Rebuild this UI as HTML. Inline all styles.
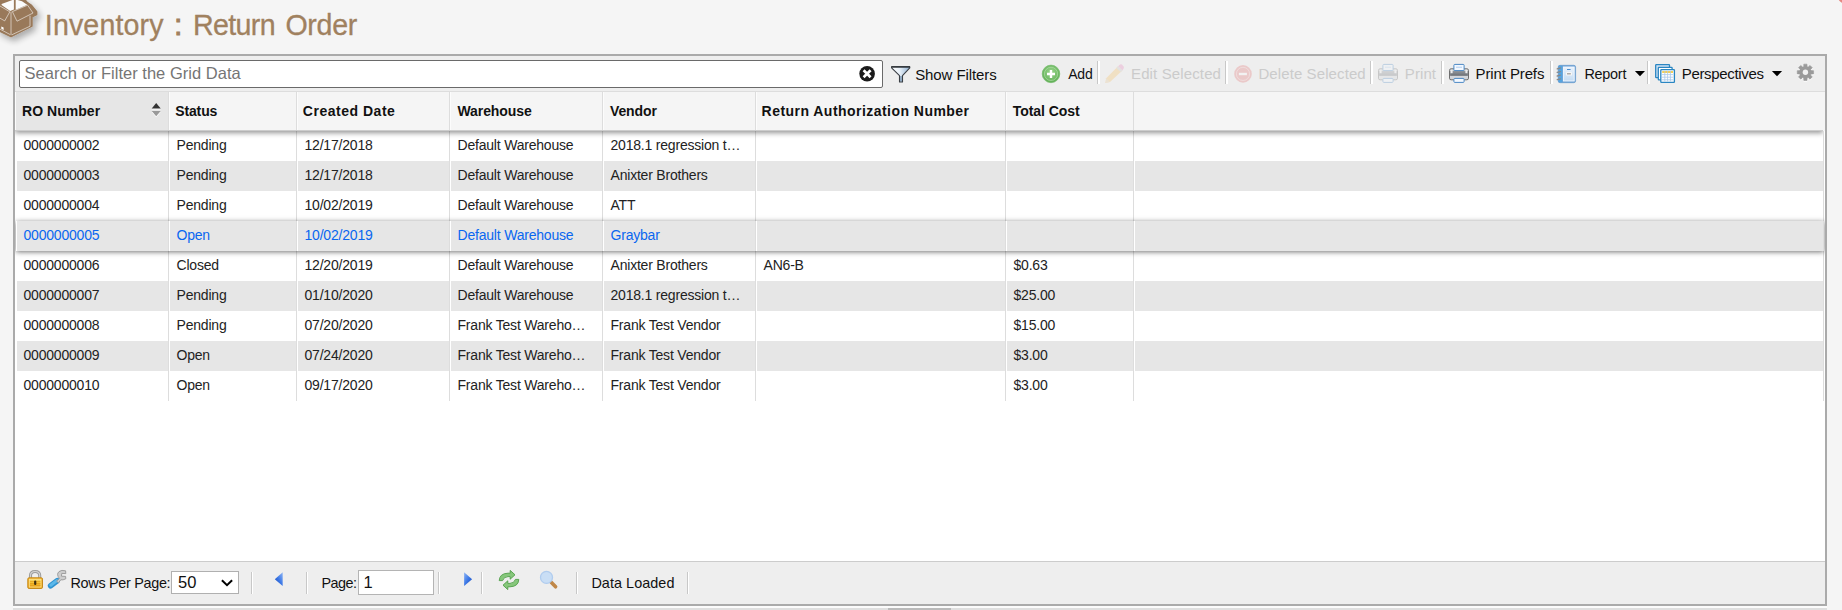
<!DOCTYPE html>
<html lang="en">
<head>
<meta charset="utf-8">
<title>Inventory : Return Order</title>
<style>
*{box-sizing:border-box;margin:0;padding:0}
html,body{width:1842px;height:610px;overflow:hidden;background:#f5f5f5}
body{position:relative;font-family:"Liberation Sans",sans-serif;color:#222}
.abs{position:absolute}
.t{position:absolute;white-space:nowrap;display:block}
#title .t{top:7px;font-size:28.6px;line-height:36px;color:#a0815f;-webkit-text-stroke:.3px #a0815f}
#title #t2{-webkit-text-stroke:1px #a0815f}
#panel{left:13px;top:54px;width:1814px;height:552px;border:2px solid #aaa;background:#eee}
#tb{left:0;top:0;width:1810px;height:36px;background:#eee;border-bottom:1px solid #ddd}
#search{left:4px;top:4px;width:864px;height:28px;border:1px solid #6a6a6a;border-radius:2px;background:#fff}
#tb #search .t{top:-1px;font-size:16.5px;line-height:26px;color:#757575}
#tb .t{font-size:15px;line-height:20px;top:8px;color:#111}
#tb #b1{top:9px}
#tb #b2{font-size:14px}
#tb #b7{font-size:14.4px}
#tb .t.dis{color:#cbcbcb}
.sep{width:3px;height:23px;top:5px;border-left:1px solid #c8c8c8;background:#fff}
#hdrbg{left:0;top:36px;width:1810px;height:470px;background:#f5f5f5}
#hdr{left:0;top:36px;width:1808px;height:39px;background:#f5f5f5;border-bottom:1px solid #ccc;box-shadow:0 2px 5px rgba(0,0,0,.42);z-index:3;clip-path:inset(0 0 -14px 0)}
.hc{top:0;height:38px;border-right:1px solid #ddd;border-left:1px solid #fcfcfc}
#hdr .t{top:0;font-weight:bold;font-size:14px;line-height:38px;color:#111}
#body{left:0;top:75px;width:1810px;height:430px;background:#fff;overflow:hidden}
.row{left:1px;width:1808px;height:30px}
.row.alt .c{background:#e6e6e6}
.c{top:0;height:30px;font-size:14px;letter-spacing:-0.2px;line-height:29px;white-space:nowrap;border-left:1px solid #fff;border-right:1px solid #ddd;overflow:hidden}
.c span{position:absolute;left:6.5px;top:0}
.hov{color:#0a66f0;box-shadow:0 1px 5px rgba(0,0,0,.55);z-index:2}
#ft{left:0;top:505px;width:1810px;height:43px;background:#eee;border-top:1px solid #ccc}
#ft .t{font-size:14.4px;line-height:20px;top:11px;color:#111}
.fsep{width:2px;height:22px;top:10px;border-left:1px solid #c8c8c8;background:#fff}
#sel{left:156px;top:9px;width:68px;height:23px;border:1px solid #b0b0b0;background:#fff}
#pgin{left:343px;top:8px;width:76px;height:25px;border:1px solid #b4b4b4;background:#fff}
#ft #sel .t,#ft #pgin .t{font-size:16.5px;line-height:20px;color:#111}
#ft #v50{left:6px;top:0px}
#ft #v1{left:4.5px;top:1px}
#strip{left:13px;top:606px;width:1814px;height:4px;background:#dfdfdf;border-top:2px solid #fbfbfb}
#thumb{left:875px;top:0;width:63px;height:2px;background:#bababa}
</style>
</head>
<body>
<svg id="boxicon" class="abs" style="left:0;top:0" width="60" height="60" viewBox="0 0 60 60">
  <defs><filter id="bsh" x="-20%" y="-20%" width="150%" height="150%"><feGaussianBlur in="SourceAlpha" stdDeviation="3.2"/><feOffset dx="3" dy="3.5"/><feComponentTransfer><feFuncA type="linear" slope=".3"/></feComponentTransfer><feMerge><feMergeNode/><feMergeNode in="SourceGraphic"/></feMerge></filter></defs>
  <g filter="url(#bsh)">
    <path d="M-2,-2 L23.6,-2 L27,2.4 L31.5,5.5 L36.6,11.8 L36.6,14.6 L31.9,16.9 L31.9,26 L11,36.6 L-2,30.2 Z" fill="#99795a" stroke="#99795a" stroke-width="1.6" stroke-linejoin="round"/>
  </g>
  <path d="M1.6,3.9 L13.9,-0.5 L13.9,9.4 L10.2,11 L1.6,4.9 Z" fill="#fbfbfb"/>
  <path d="M15.7,-0.5 L22,1.2 L27.2,4.7 L15.7,9.8 Z" fill="#fbfbfb"/>
  <g fill="none" stroke="#fff" stroke-opacity=".62" stroke-width=".9">
    <path d="M12.4,11.6 L27.6,5.2 L33,13 L17,21.2 Z"/>
    <path d="M0,6 L9.8,11.8 L4.7,20.9 L-1,17.6"/>
    <path d="M11,11.8 L11,35"/>
    <path d="M30,15.7 L30,26.2 L11.8,34.8"/>
    <path d="M-1,28.6 L10.2,34.6"/>
  </g>
  <path d="M1.3,26.4 L3.6,27.6 L3.6,30 L1.3,28.8 Z" fill="#fff"/>
</svg>
<div id="title">
  <span class="t" id="t1" style="left:44.8px;letter-spacing:0.14px">Inventory</span>
  <span class="t" id="t2" style="left:174.2px;letter-spacing:0.00px">:</span>
  <span class="t" id="t3" style="left:193.0px;letter-spacing:-0.64px">Return</span>
  <span class="t" id="t4" style="left:285.4px;letter-spacing:-0.30px">Order</span>
</div>
<div id="panel" class="abs">
  <div id="tb" class="abs">
    <div id="search" class="abs"><span class="t" id="s1" style="left:4.6px;letter-spacing:0.02px">Search or Filter the Grid Data</span></div>
    <span class="t" id="b1" style="left:900.2px;letter-spacing:-0.09px">Show Filters</span>
    <span class="t" id="b2" style="left:1053.2px;letter-spacing:-0.20px">Add</span>
    <div class="abs sep" style="left:1082px"></div>
    <span class="t dis" id="b3" style="left:1116.0px;letter-spacing:0.13px">Edit Selected</span>
    <div class="abs sep" style="left:1210px"></div>
    <span class="t dis" id="b4" style="left:1243.4px;letter-spacing:0.10px">Delete Selected</span>
    <div class="abs sep" style="left:1355px"></div>
    <span class="t dis" id="b5" style="left:1389.8px;letter-spacing:0.10px">Print</span>
    <div class="abs sep" style="left:1426px"></div>
    <span class="t" id="b6" style="left:1460.6px;letter-spacing:-0.12px">Print Prefs</span>
    <div class="abs sep" style="left:1535px"></div>
    <span class="t" id="b7" style="left:1569.4px;letter-spacing:-0.24px">Report</span>
    <div class="abs sep" style="left:1632px"></div>
    <span class="t" id="b8" style="left:1666.8px;letter-spacing:-0.34px">Perspectives</span>
  </div>
  <div id="hdrbg" class="abs"></div>
  <div id="hdr" class="abs">
    <div class="abs hc" style="left:0;width:154px;background:#e6e6e6"></div>
    <div class="abs hc" style="left:154px;width:128px"></div>
    <div class="abs hc" style="left:282px;width:153px"></div>
    <div class="abs hc" style="left:435px;width:153px"></div>
    <div class="abs hc" style="left:588px;width:153px"></div>
    <div class="abs hc" style="left:741px;width:250px"></div>
    <div class="abs hc" style="left:991px;width:128px"></div>
    <span class="t" id="h1" style="left:7.0px;letter-spacing:0.04px">RO Number</span>
    <span class="t" id="h2" style="left:160.2px;letter-spacing:-0.12px">Status</span>
    <span class="t" id="h3" style="left:287.8px;letter-spacing:0.52px">Created Date</span>
    <span class="t" id="h4" style="left:442.4px;letter-spacing:-0.06px">Warehouse</span>
    <span class="t" id="h5" style="left:595.0px;letter-spacing:-0.12px">Vendor</span>
    <span class="t" id="h6" style="left:746.6px;letter-spacing:0.46px">Return Authorization Number</span>
    <span class="t" id="h7" style="left:997.8px;letter-spacing:-0.06px">Total Cost</span>
  </div>
  <div id="body" class="abs">
    <div class="row abs" style="top:0px">
      <div class="abs c c1" style="left:0px;width:153px"><span>0000000002</span></div>
      <div class="abs c c2" style="left:153px;width:128px"><span>Pending</span></div>
      <div class="abs c c3" style="left:281px;width:153px"><span>12/17/2018</span></div>
      <div class="abs c c4" style="left:434px;width:153px"><span>Default Warehouse</span></div>
      <div class="abs c c5" style="left:587px;width:153px"><span>2018.1 regression t…</span></div>
      <div class="abs c c6" style="left:740px;width:250px"><span></span></div>
      <div class="abs c c7" style="left:990px;width:128px"><span></span></div>
      <div class="abs c cf" style="left:1118px;width:690px"></div>
    </div>
    <div class="row abs alt" style="top:30px">
      <div class="abs c c1" style="left:0px;width:153px"><span>0000000003</span></div>
      <div class="abs c c2" style="left:153px;width:128px"><span>Pending</span></div>
      <div class="abs c c3" style="left:281px;width:153px"><span>12/17/2018</span></div>
      <div class="abs c c4" style="left:434px;width:153px"><span>Default Warehouse</span></div>
      <div class="abs c c5" style="left:587px;width:153px"><span>Anixter Brothers</span></div>
      <div class="abs c c6" style="left:740px;width:250px"><span></span></div>
      <div class="abs c c7" style="left:990px;width:128px"><span></span></div>
      <div class="abs c cf" style="left:1118px;width:690px"></div>
    </div>
    <div class="row abs" style="top:60px">
      <div class="abs c c1" style="left:0px;width:153px"><span>0000000004</span></div>
      <div class="abs c c2" style="left:153px;width:128px"><span>Pending</span></div>
      <div class="abs c c3" style="left:281px;width:153px"><span>10/02/2019</span></div>
      <div class="abs c c4" style="left:434px;width:153px"><span>Default Warehouse</span></div>
      <div class="abs c c5" style="left:587px;width:153px"><span>ATT</span></div>
      <div class="abs c c6" style="left:740px;width:250px"><span></span></div>
      <div class="abs c c7" style="left:990px;width:128px"><span></span></div>
      <div class="abs c cf" style="left:1118px;width:690px"></div>
    </div>
    <div class="row abs alt hov" style="top:90px">
      <div class="abs c c1" style="left:0px;width:153px"><span>0000000005</span></div>
      <div class="abs c c2" style="left:153px;width:128px"><span>Open</span></div>
      <div class="abs c c3" style="left:281px;width:153px"><span>10/02/2019</span></div>
      <div class="abs c c4" style="left:434px;width:153px"><span>Default Warehouse</span></div>
      <div class="abs c c5" style="left:587px;width:153px"><span>Graybar</span></div>
      <div class="abs c c6" style="left:740px;width:250px"><span></span></div>
      <div class="abs c c7" style="left:990px;width:128px"><span></span></div>
      <div class="abs c cf" style="left:1118px;width:690px"></div>
    </div>
    <div class="row abs" style="top:120px">
      <div class="abs c c1" style="left:0px;width:153px"><span>0000000006</span></div>
      <div class="abs c c2" style="left:153px;width:128px"><span>Closed</span></div>
      <div class="abs c c3" style="left:281px;width:153px"><span>12/20/2019</span></div>
      <div class="abs c c4" style="left:434px;width:153px"><span>Default Warehouse</span></div>
      <div class="abs c c5" style="left:587px;width:153px"><span>Anixter Brothers</span></div>
      <div class="abs c c6" style="left:740px;width:250px"><span>AN6-B</span></div>
      <div class="abs c c7" style="left:990px;width:128px"><span>$0.63</span></div>
      <div class="abs c cf" style="left:1118px;width:690px"></div>
    </div>
    <div class="row abs alt" style="top:150px">
      <div class="abs c c1" style="left:0px;width:153px"><span>0000000007</span></div>
      <div class="abs c c2" style="left:153px;width:128px"><span>Pending</span></div>
      <div class="abs c c3" style="left:281px;width:153px"><span>01/10/2020</span></div>
      <div class="abs c c4" style="left:434px;width:153px"><span>Default Warehouse</span></div>
      <div class="abs c c5" style="left:587px;width:153px"><span>2018.1 regression t…</span></div>
      <div class="abs c c6" style="left:740px;width:250px"><span></span></div>
      <div class="abs c c7" style="left:990px;width:128px"><span>$25.00</span></div>
      <div class="abs c cf" style="left:1118px;width:690px"></div>
    </div>
    <div class="row abs" style="top:180px">
      <div class="abs c c1" style="left:0px;width:153px"><span>0000000008</span></div>
      <div class="abs c c2" style="left:153px;width:128px"><span>Pending</span></div>
      <div class="abs c c3" style="left:281px;width:153px"><span>07/20/2020</span></div>
      <div class="abs c c4" style="left:434px;width:153px"><span>Frank Test Wareho…</span></div>
      <div class="abs c c5" style="left:587px;width:153px"><span>Frank Test Vendor</span></div>
      <div class="abs c c6" style="left:740px;width:250px"><span></span></div>
      <div class="abs c c7" style="left:990px;width:128px"><span>$15.00</span></div>
      <div class="abs c cf" style="left:1118px;width:690px"></div>
    </div>
    <div class="row abs alt" style="top:210px">
      <div class="abs c c1" style="left:0px;width:153px"><span>0000000009</span></div>
      <div class="abs c c2" style="left:153px;width:128px"><span>Open</span></div>
      <div class="abs c c3" style="left:281px;width:153px"><span>07/24/2020</span></div>
      <div class="abs c c4" style="left:434px;width:153px"><span>Frank Test Wareho…</span></div>
      <div class="abs c c5" style="left:587px;width:153px"><span>Frank Test Vendor</span></div>
      <div class="abs c c6" style="left:740px;width:250px"><span></span></div>
      <div class="abs c c7" style="left:990px;width:128px"><span>$3.00</span></div>
      <div class="abs c cf" style="left:1118px;width:690px"></div>
    </div>
    <div class="row abs" style="top:240px">
      <div class="abs c c1" style="left:0px;width:153px"><span>0000000010</span></div>
      <div class="abs c c2" style="left:153px;width:128px"><span>Open</span></div>
      <div class="abs c c3" style="left:281px;width:153px"><span>09/17/2020</span></div>
      <div class="abs c c4" style="left:434px;width:153px"><span>Frank Test Wareho…</span></div>
      <div class="abs c c5" style="left:587px;width:153px"><span>Frank Test Vendor</span></div>
      <div class="abs c c6" style="left:740px;width:250px"><span></span></div>
      <div class="abs c c7" style="left:990px;width:128px"><span>$3.00</span></div>
      <div class="abs c cf" style="left:1118px;width:690px"></div>
    </div>
  </div>
  <div id="ft" class="abs">
    <div class="abs" id="sel"><span class="t" id="v50">50</span></div>
    <div class="abs" id="pgin"><span class="t" id="v1">1</span></div>
    <div class="abs fsep" style="left:236px"></div>
    <div class="abs fsep" style="left:291px"></div>
    <div class="abs fsep" style="left:423px"></div>
    <div class="abs fsep" style="left:466px"></div>
    <div class="abs fsep" style="left:561px"></div>
    <div class="abs fsep" style="left:672px"></div>
    <span class="t" id="f1" style="left:55.5px;letter-spacing:-0.30px">Rows Per Page:</span>
    <span class="t" id="f2" style="left:306.5px;letter-spacing:-0.55px">Page:</span>
    <span class="t" id="f3" style="left:576.4px;letter-spacing:0.06px">Data Loaded</span>
  </div>
</div>
<div id="strip" class="abs"><div id="thumb" class="abs"></div></div>
<svg id="icons" class="abs" style="left:0;top:0;z-index:5" width="1842" height="610" viewBox="0 0 1842 610">
  <defs>
    <linearGradient id="gFun" x1="0" y1="0" x2="1" y2="0"><stop offset="0" stop-color="#fff"/><stop offset=".45" stop-color="#e8f0f8"/><stop offset="1" stop-color="#8fb0d2"/></linearGradient>
    <radialGradient id="gAdd" cx=".5" cy=".4" r=".6"><stop offset="0" stop-color="#9bd68d"/><stop offset="1" stop-color="#5fae55"/></radialGradient>
    <linearGradient id="gArr" x1="0" y1="0" x2="1" y2="1"><stop offset="0" stop-color="#8fb6f5"/><stop offset=".5" stop-color="#3c78e6"/><stop offset="1" stop-color="#1546b8"/></linearGradient>
    <linearGradient id="gArrR" x1="1" y1="0" x2="0" y2="1"><stop offset="0" stop-color="#8fb6f5"/><stop offset=".5" stop-color="#3c78e6"/><stop offset="1" stop-color="#1546b8"/></linearGradient>
    <linearGradient id="gLock" x1="0" y1="0" x2="0" y2="1"><stop offset="0" stop-color="#fbe27a"/><stop offset=".5" stop-color="#f4bf2a"/><stop offset="1" stop-color="#e9a31c"/></linearGradient>
    <linearGradient id="gPr" x1="0" y1="0" x2="0" y2="1"><stop offset="0" stop-color="#94989d"/><stop offset=".6" stop-color="#7c8085"/><stop offset="1" stop-color="#6a6e73"/></linearGradient>
    <linearGradient id="gNb" x1="0" y1="0" x2="0" y2="1"><stop offset="0" stop-color="#eaf2fb"/><stop offset="1" stop-color="#c4dcf3"/></linearGradient>
  </defs>
  <!-- corner blob -->
  <ellipse cx="1842.5" cy="-0.5" rx="4.2" ry="3" fill="#e58882" transform="rotate(35 1842.5 -0.5)"/>
  <!-- sort arrows -->
  <path d="M151.7,109.4 L156.2,103.9 L160.7,109.4 Z" fill="#fff" opacity=".9"/>
  <path d="M151.7,108.4 L156.2,102.9 L160.7,108.4 Z" fill="#333"/>
  <path d="M151.7,111.9 L160.7,111.9 L156.2,117.3 Z" fill="#fff" opacity=".9"/>
  <path d="M151.7,110.9 L160.7,110.9 L156.2,116.3 Z" fill="#999"/>
  <!-- clear -->
  <circle cx="867.1" cy="73.8" r="7.8" fill="#1b1b1b"/>
  <path d="M863.6,70.3 L870.6,77.3 M870.6,70.3 L863.6,77.3" stroke="#fff" stroke-width="2.7" fill="none"/>
  <!-- funnel -->
  <path d="M891.6,66.8 L909.8,66.8 L909.8,67.8 L902.5,75.6 L902.5,81.9 L899.5,81.9 L899.5,75.6 L891.6,67.8 Z" fill="url(#gFun)" stroke="#3a3f45" stroke-width="1.1" stroke-linejoin="round"/>
  <path d="M891.4,66.9 H910" stroke="#2f3338" stroke-width="1.5"/>
  <rect x="900.1" y="76" width="1.8" height="5.4" fill="#8aa3bd"/>
  <!-- add -->
  <circle cx="1051" cy="73.9" r="8.8" fill="url(#gAdd)" stroke="#6fb865" stroke-width=".6"/>
  <circle cx="1051" cy="73.9" r="6.6" fill="none" stroke="#b4e0aa" stroke-width=".8" opacity=".8"/>
  <path d="M1047,74 H1055 M1051,70 V78" stroke="#fff" stroke-width="2.4" fill="none"/>
  <!-- pencil (disabled) -->
  <g opacity=".32">
    <path d="M1105.3,83 L1106.2,78.3 L1118,66.2 L1122.4,70.4 L1110,82 Z" fill="#f7c46c"/>
    <path d="M1118,66.2 L1120,64.4 Q1121,63.8 1122,64.6 L1123.6,66.4 Q1124.2,67.4 1123.6,68.4 L1122.4,70.4 Z" fill="#e98fc0"/>
    <path d="M1116.3,68 L1118,66.2 L1122.4,70.4 L1120.8,72 Z" fill="#c9c9c9"/>
    <path d="M1105.3,83 L1106.2,78.3 L1110,82 Z" fill="#e4c9a0"/>
  </g>
  <!-- delete (disabled) -->
  <g opacity=".27">
    <circle cx="1243" cy="73.9" r="8.8" fill="#e36a6a"/>
    <circle cx="1243" cy="73.9" r="6.6" fill="none" stroke="#f6bcbc" stroke-width=".8"/>
    <rect x="1238.9" y="72.8" width="8" height="2.4" fill="#fff"/>
  </g>
  <!-- printers -->
  <g transform="translate(1378,63.8)" opacity=".3">
      <rect x=".5" y="5" width="19" height="11" rx="1.6" fill="#d3d6da" stroke="#6e6e6e" stroke-width="1"/>
      <rect x="1.1" y="7" width="17.8" height="5" fill="url(#gPr)"/>
      <rect x="1.6" y="6" width="2" height="3.4" fill="#eeeeee"/><rect x="16.4" y="6" width="2" height="3.4" fill="#eeeeee"/>
      <rect x="4.9" y=".6" width="10.2" height="6.2" rx=".9" fill="#f2f8ff" stroke="#4a88c4" stroke-width="1"/>
      <rect x="7" y="2.9" width="6" height="1.1" fill="#b5d2f2"/>
      <rect x="4.9" y="14.6" width="10.2" height="4" rx=".9" fill="#f4f9ff" stroke="#4a88c4" stroke-width="1"/>
  </g>
  <g transform="translate(1449,63.8)">
      <rect x=".5" y="5" width="19" height="11" rx="1.6" fill="#d3d6da" stroke="#6e6e6e" stroke-width="1"/>
      <rect x="1.1" y="7" width="17.8" height="5" fill="url(#gPr)"/>
      <rect x="1.6" y="6" width="2" height="3.4" fill="#eeeeee"/><rect x="16.4" y="6" width="2" height="3.4" fill="#eeeeee"/>
      <rect x="4.9" y=".6" width="10.2" height="6.2" rx=".9" fill="#f2f8ff" stroke="#4a88c4" stroke-width="1"/>
      <rect x="7" y="2.9" width="6" height="1.1" fill="#b5d2f2"/>
      <rect x="4.9" y="14.6" width="10.2" height="4" rx=".9" fill="#f4f9ff" stroke="#4a88c4" stroke-width="1"/>
  </g>
  <!-- report notebook -->
  <rect x="1558.2" y="65.3" width="17.4" height="17.4" rx="1.8" fill="#6fa3d6" stroke="#5b92c8" stroke-width=".6"/>
  <rect x="1558.6" y="65.8" width="3.6" height="16.4" fill="#55a4e0"/>
  <rect x="1563.4" y="67" width="10.8" height="14" fill="url(#gNb)" stroke="#f4f9ff" stroke-width=".9"/>
  <rect x="1566" y="72" width="6" height="3.6" rx=".8" fill="#f6f6f6"/><rect x="1567" y="73.2" width="3.8" height="1.2" fill="#9a9a9a"/>
  <rect x="1567" y="69" width="3.6" height="1" fill="#4d8fd0"/>
  <g stroke="#8a8a8a" stroke-width="1.3" stroke-linecap="round"><path d="M1557.2,68.8 L1560.4,68 M1557.2,72.4 L1560.4,71.6 M1557.2,76 L1560.4,75.2 M1557.2,79.6 L1560.4,78.8"/></g>
  <!-- carets -->
  <path d="M1634.9,71 L1645,71 L1640,76.3 Z" fill="#000"/>
  <path d="M1771.9,71 L1782.1,71 L1777,76.3 Z" fill="#000"/>
  <!-- perspectives -->
  <g stroke="#2a86c2" stroke-width="1.3">
    <rect x="1655.7" y="64.7" width="13.8" height="13" rx=".6" fill="#cfe2f4"/>
    <rect x="1658.3" y="67.3" width="13.8" height="12.6" rx=".6" fill="#fff"/>
    <rect x="1660.8" y="69.7" width="13.6" height="12.6" rx=".6" fill="#fff"/>
  </g>
  <rect x="1662.2" y="71" width="10.8" height="2" fill="#f6cf55"/>
  <g stroke="#a9c8ea" stroke-width=".8"><path d="M1662,74.6 H1673.2 M1662,77.2 H1673.2 M1662,79.8 H1673.2 M1664.8,71 V81.4 M1667.6,71 V81.4 M1670.4,71 V81.4"/></g>
  <!-- gear -->
  <g transform="translate(1805.4,72.3)">
    <path d="M-1.72,-5.64 L-1.58,-8.15 L1.58,-8.15 L1.72,-5.64 L2.77,-5.21 L4.64,-6.88 L6.88,-4.64 L5.21,-2.77 L5.64,-1.72 L8.15,-1.58 L8.15,1.58 L5.64,1.72 L5.21,2.77 L6.88,4.64 L4.64,6.88 L2.77,5.21 L1.72,5.64 L1.58,8.15 L-1.58,8.15 L-1.72,5.64 L-2.77,5.21 L-4.64,6.88 L-6.88,4.64 L-5.21,2.77 L-5.64,1.72 L-8.15,1.58 L-8.15,-1.58 L-5.64,-1.72 L-5.21,-2.77 L-6.88,-4.64 L-4.64,-6.88 L-2.77,-5.21 Z" fill="#fff" opacity=".8" transform="translate(0,1)" stroke="#fff" stroke-width=".6" stroke-linejoin="round"/>
    <path d="M-1.72,-5.64 L-1.58,-8.15 L1.58,-8.15 L1.72,-5.64 L2.77,-5.21 L4.64,-6.88 L6.88,-4.64 L5.21,-2.77 L5.64,-1.72 L8.15,-1.58 L8.15,1.58 L5.64,1.72 L5.21,2.77 L6.88,4.64 L4.64,6.88 L2.77,5.21 L1.72,5.64 L1.58,8.15 L-1.58,8.15 L-1.72,5.64 L-2.77,5.21 L-4.64,6.88 L-6.88,4.64 L-5.21,2.77 L-5.64,1.72 L-8.15,1.58 L-8.15,-1.58 L-5.64,-1.72 L-5.21,-2.77 L-6.88,-4.64 L-4.64,-6.88 L-2.77,-5.21 Z" fill="#9a9a9a" stroke="#9a9a9a" stroke-width=".6" stroke-linejoin="round"/>
    <circle r="2.7" fill="#f1f1f1"/>
  </g>
  <!-- lock -->
  <path d="M30.5,578 V575.6 Q30.5,571.5 35.1,571.5 Q39.7,571.5 39.7,575.6 V578" fill="none" stroke="#9c9c9c" stroke-width="3.1"/>
  <path d="M30.5,578 V575.6 Q30.5,571.5 35.1,571.5 Q39.7,571.5 39.7,575.6 V578" fill="none" stroke="#d4d4d4" stroke-width="1.1"/>
  <rect x="27.8" y="577.8" width="14.7" height="10.7" rx="1.3" fill="#eda91f" stroke="#c68a1b" stroke-width="1"/>
  <rect x="29.3" y="579.2" width="11.7" height="7.8" fill="url(#gLock)" stroke="#fbe391" stroke-width=".8"/>
  <g stroke="#e39d1c" stroke-width=".8"><path d="M30,581.4 H40.4 M30,583.5 H40.4 M30,585.6 H40.4"/></g>
  <rect x="34.1" y="580.6" width="2.2" height="4.4" rx="1" fill="#3f3010"/>
  <!-- wrench -->
  <path d="M50.6,585.8 L57.2,580.8" stroke="#2f93d0" stroke-width="5.6" stroke-linecap="round" fill="none"/>
  <path d="M50.8,585.2 L56.8,580.6" stroke="#5bb8ea" stroke-width="3" stroke-linecap="round" fill="none"/>
  <path d="M56.6,581.2 L59.4,578.4 Q56,574.4 59,571.6 Q61.6,569.6 65.6,570.8 L65.8,573.6 L61.8,573.4 L61.4,576.2 L65.6,576.4 L65.8,578.8 Q62.8,580.4 60.8,579.8 L58.4,582.8 Z" fill="#cdcdcd" stroke="#969696" stroke-width=".9" stroke-linejoin="round"/>
  <!-- select chevron -->
  <path d="M221.9,580.2 L227,585.2 L232.1,580.2" stroke="#000" stroke-width="2" fill="none"/>
  <!-- pager arrows -->
  <path d="M274.8,579.2 L282.7,572.3 L282.7,586.1 Z" fill="url(#gArrR)"/>
  <path d="M472.1,579.2 L464.1,572.2 L464.1,586.1 Z" fill="url(#gArr)"/>
  <!-- refresh -->
  <g fill="#86c77b" stroke="#4f9e47" stroke-width=".9" stroke-linejoin="round">
    <path d="M499.2,580.6 Q499.6,573.4 508,573.2 L510.2,573.2 L510.2,570.4 L515,574.8 L510.2,579.2 L510.2,576.6 L508,576.6 Q503.6,576.8 502.6,580.6 Z"/>
    <path d="M518.8,579.4 Q518.4,586.6 510,586.8 L507.8,586.8 L507.8,589.6 L503,585.2 L507.8,580.8 L507.8,583.4 L510,583.4 Q514.4,583.2 515.4,579.4 Z"/>
  </g>
  <!-- magnifier -->
  <path d="M551.2,582.2 L555.6,586.8" stroke="#c08748" stroke-width="3.6" stroke-linecap="round"/>
  <circle cx="546.5" cy="577.4" r="6" fill="#c9def5" stroke="#b0ccee" stroke-width="1.3"/>
</svg>
</body>
</html>
